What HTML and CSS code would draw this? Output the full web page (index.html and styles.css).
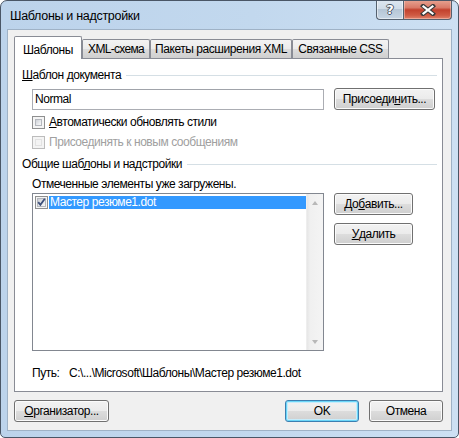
FILE: index.html
```html
<!DOCTYPE html>
<html lang="ru">
<head>
<meta charset="utf-8">
<title>Шаблоны и надстройки</title>
<link rel="stylesheet" href="styles.css">
</head>
<body>
<div class="window">
  <div class="titlebar">
    <div class="title">Шаблоны и надстройки</div>
    <div class="controls">
      <div class="cap-btn help"><span class="help-glyph">?</span></div>
      <div class="cap-btn close">
        <svg width="16" height="12" viewBox="0 0 16 12">
          <path d="M3 2 L13 10 M13 2 L3 10" stroke="#3a3a3a" stroke-width="4.2" stroke-linecap="square" fill="none"/>
          <path d="M3.5 2.5 L12.5 9.5 M12.5 2.5 L3.5 9.5" stroke="#ffffff" stroke-width="2.2" stroke-linecap="square" fill="none"/>
        </svg>
      </div>
    </div>
  </div>
  <div class="client">
    <div class="tabs">
      <div class="tab active tab-templates">Шаблоны</div>
      <div class="tab tab-xml">XML-схема</div>
      <div class="tab tab-packs">Пакеты расширения XML</div>
      <div class="tab tab-css">Связанные CSS</div>
    </div>
    <div class="panel">
      <div class="group-head"><span><u>Ш</u>аблон документа</span><i class="rule"></i></div>
      <div class="group-body">
        <div class="attach-row">
          <div class="input">Normal</div>
          <div class="btn attach">Присоеди<u>н</u>ить...</div>
        </div>
        <div class="check-row">
          <span class="cb"></span><span><u>А</u>втоматически обновлять стили</span>
        </div>
        <div class="check-row disabled">
          <span class="cb"></span><span>Присоединять к новым сообщениям</span>
        </div>
      </div>
      <div class="group-head second"><span>Общие шаб<u>л</u>оны и надстройки</span><i class="rule"></i></div>
      <div class="group-body">
        <div class="note">Отмеченные элементы уже загружены.</div>
        <div class="list-row">
          <div class="list">
            <div class="items">
              <div class="item">
                <span class="cb checked">
                  <svg width="11" height="11" viewBox="0 0 11 11"><path d="M2.2 5.2 L4.4 7.8 L8.8 1.8" stroke="#3d4f7a" stroke-width="1.8" fill="none"/></svg>
                </span>
                <span class="item-text">Мастер резюме1.dot</span>
              </div>
            </div>
            <div class="scrollbar">
              <div class="sb-btn"><span class="arrow up"></span></div>
              <div class="sb-track"></div>
              <div class="sb-btn"><span class="arrow down"></span></div>
            </div>
          </div>
          <div class="list-buttons">
            <div class="btn side">До<u>б</u>авить...</div>
            <div class="btn side"><u>У</u>далить</div>
          </div>
        </div>
        <div class="path"><span class="path-label">Путь:</span><span>C:\...\Microsoft\Шаблоны\Мастер резюме1.dot</span></div>
      </div>
    </div>
    <div class="footer">
      <div class="btn organizer"><u>О</u>рганизатор...</div>
      <div class="footer-right">
        <div class="btn dialog default">OK</div>
        <div class="btn dialog">Отмена</div>
      </div>
    </div>
  </div>
</div>
</body>
</html>
```

FILE: styles.css
```css
html, body {
  margin: 0;
  padding: 0;
  background: #ffffff;
}

body {
  font-family: "Liberation Sans", Arial, sans-serif;
  font-size: 12px;
  line-height: 16px;
  letter-spacing: -0.45px;
  color: #000000;
}

u {
  text-decoration: underline;
  text-underline-offset: 1px;
}

.window {
  width: 459px;
  height: 438px;
  box-sizing: border-box;
  border: 1px solid #4a5666;
  border-radius: 7px 7px 5px 5px;
  background: linear-gradient(to right, #bcd3eb 0%, #c2d8ee 55%, #cde0f3 100%);
  padding: 0 6px 6px 6px;
  display: flex;
  flex-direction: column;
  overflow: hidden;
}

.titlebar {
  height: 28px;
  display: flex;
  justify-content: space-between;
  align-items: flex-start;
  flex: none;
}

.title {
  margin-top: 7px;
  padding-left: 3px;
  font-size: 12.5px;
  letter-spacing: -0.3px;
  color: #000000;
}

.controls {
  display: flex;
  margin-top: -1px;
}

.cap-btn {
  height: 20px;
  box-sizing: border-box;
  border: 1px solid #55616f;
  border-top: none;
  display: flex;
  align-items: center;
  justify-content: center;
}

.help {
  width: 27px;
  border-right: none;
  border-radius: 0 0 0 4px;
  background: linear-gradient(to bottom, #dde7f1 0%, #d0dce8 45%, #b6c6d6 50%, #c7d6e4 100%);
  box-shadow: inset 0 0 0 1px rgba(255, 255, 255, 0.5);
}

.help-glyph {
  font-family: "DejaVu Sans", sans-serif;
  font-weight: bold;
  font-size: 13px;
  line-height: 13px;
  letter-spacing: 0;
  color: #ffffff;
  text-shadow: 1px 0 0 #4b5563, -1px 0 0 #4b5563, 0 1px 0 #4b5563, 0 -1px 0 #4b5563;
}

.close {
  width: 49px;
  border-radius: 0 0 4px 0;
  background: linear-gradient(to bottom, #e7a493 0%, #d97a68 40%, #c2412d 52%, #cf5a43 80%, #e0826a 100%);
  box-shadow: inset 0 0 0 1px rgba(255, 220, 210, 0.45);
}

.client {
  flex: 1;
  border: 1px solid #9fb2c6;
  background: #f0f0f0;
  padding: 6px 8px 8px 6px;
  display: flex;
  flex-direction: column;
  min-height: 0;
}

.tabs {
  display: flex;
  align-items: flex-end;
  height: 23px;
  margin-bottom: -1px;
  position: relative;
  z-index: 1;
  flex: none;
}

.tab {
  box-sizing: border-box;
  height: 19px;
  margin-bottom: 1px;
  padding: 1px 0 0 0;
  text-align: center;
  line-height: 16px;
  border: 1px solid #898c95;
  border-bottom: none;
  border-radius: 2px 2px 0 0;
  background: linear-gradient(to bottom, #f3f3f3 0%, #ebebeb 50%, #dddddd 50%, #cfcfcf 100%);
  white-space: nowrap;
  flex: none;
}

.tab.active {
  height: 23px;
  margin-bottom: 0;
  padding: 5px 0 0 0;
  background: #ffffff;
}

.tab-templates { width: 68px; }
.tab-xml { width: 68px; letter-spacing: -0.7px; }
.tab-packs { width: 142px; }
.tab-css { width: 97px; }

.panel {
  flex: 1;
  border: 1px solid #898c95;
  background: #ffffff;
  padding: 8px 5px 0 7px;
  display: flex;
  flex-direction: column;
  min-height: 0;
}

.group-head {
  display: flex;
  align-items: center;
  height: 16px;
}

.group-head.second {
  margin-top: 4px;
}

.rule {
  flex: 1;
  height: 1px;
  background: #d5dfe5;
  margin-left: 5px;
}

.group-body {
  padding: 0 2px 0 10px;
  display: flex;
  flex-direction: column;
}

.attach-row {
  display: flex;
  align-items: flex-start;
  margin-top: 5px;
  gap: 10px;
}

.input {
  flex: 1;
  height: 21px;
  margin-top: 1px;
  box-sizing: border-box;
  border: 1px solid #abadb3;
  border-top-color: #a0a3aa;
  padding: 1px 2px 0 2px;
  line-height: 17px;
  background: #ffffff;
}

.btn {
  box-sizing: border-box;
  border: 1px solid #707070;
  border-radius: 3px;
  background: linear-gradient(to bottom, #f2f2f2 0%, #ebebeb 50%, #dddddd 50%, #cfcfcf 100%);
  box-shadow: inset 0 0 0 1px #fbfbfb;
  display: flex;
  align-items: center;
  justify-content: center;
  white-space: nowrap;
  color: #000000;
}

.attach {
  width: 101px;
  height: 22px;
}

.check-row {
  display: flex;
  align-items: center;
  height: 20px;
  margin-top: 2px;
}

.check-row + .check-row {
  margin-top: 0;
}

.cb {
  width: 13px;
  height: 13px;
  box-sizing: border-box;
  border: 1px solid #8e8f8f;
  background: #f4f4f4;
  padding: 2px;
  flex: none;
  margin-right: 4px;
  display: flex;
}

.cb::before {
  content: "";
  flex: 1;
  border: 1px solid #b4b7bd;
  background: linear-gradient(135deg, #cdd0d6 0%, #eceef0 70%, #f6f6f6 100%);
}

.check-row.disabled {
  color: #a0a0a0;
}

.check-row.disabled .cb {
  border-color: #bcbcbc;
}

.check-row.disabled .cb::before {
  border-color: #e2e2e2;
  background: #f4f4f4;
}

.note {
  margin-top: 4px;
  height: 16px;
}

.list-row {
  display: flex;
  align-items: flex-start;
  margin-top: 1px;
  gap: 10px;
}

.list {
  width: 292px;
  height: 158px;
  box-sizing: border-box;
  border: 1px solid #828790;
  background: #ffffff;
  display: flex;
  flex: none;
}

.items {
  flex: 1;
  padding-top: 1px;
}

.item {
  display: flex;
  align-items: center;
  height: 14px;
  padding-left: 2px;
}

.item .cb {
  margin-right: 1px;
  padding: 0;
  position: relative;
}

.item .cb::before {
  margin: 1px;
}

.item .cb svg {
  position: absolute;
  left: 0;
  top: 0;
}

.item-text {
  flex: 1;
  height: 13px;
  line-height: 13px;
  padding-left: 1px;
  background: #3399ff;
  color: #ffffff;
}

.scrollbar {
  width: 17px;
  display: flex;
  flex-direction: column;
  background: linear-gradient(to right, #e6e6e6 0%, #f0f0f0 20%, #f4f4f4 100%);
  border-left: 1px solid #eeeeee;
  box-sizing: border-box;
}

.sb-btn {
  height: 17px;
  display: flex;
  align-items: center;
  justify-content: center;
}

.sb-track {
  flex: 1;
}

.arrow {
  width: 0;
  height: 0;
  border-left: 3.5px solid transparent;
  border-right: 3.5px solid transparent;
}

.arrow.up {
  border-bottom: 4px solid #b8b8b8;
}

.arrow.down {
  border-top: 4px solid #b8b8b8;
}

.list-buttons {
  display: flex;
  flex-direction: column;
  gap: 8px;
}

.side {
  width: 79px;
  height: 22px;
}

.path {
  margin-top: 14px;
  height: 16px;
  display: flex;
}

.path-label {
  width: 37px;
  flex: none;
}

.footer {
  display: flex;
  justify-content: space-between;
  margin-top: 8px;
  flex: none;
}

.footer-right {
  display: flex;
  gap: 10px;
}

.organizer {
  width: 95px;
  height: 22px;
}

.dialog {
  width: 74px;
  height: 22px;
}

.default {
  border-color: #3c7fb1;
  box-shadow: inset 0 0 0 1px #6ad6f8, inset 0 0 0 2px #c6ecfb;
}
```
